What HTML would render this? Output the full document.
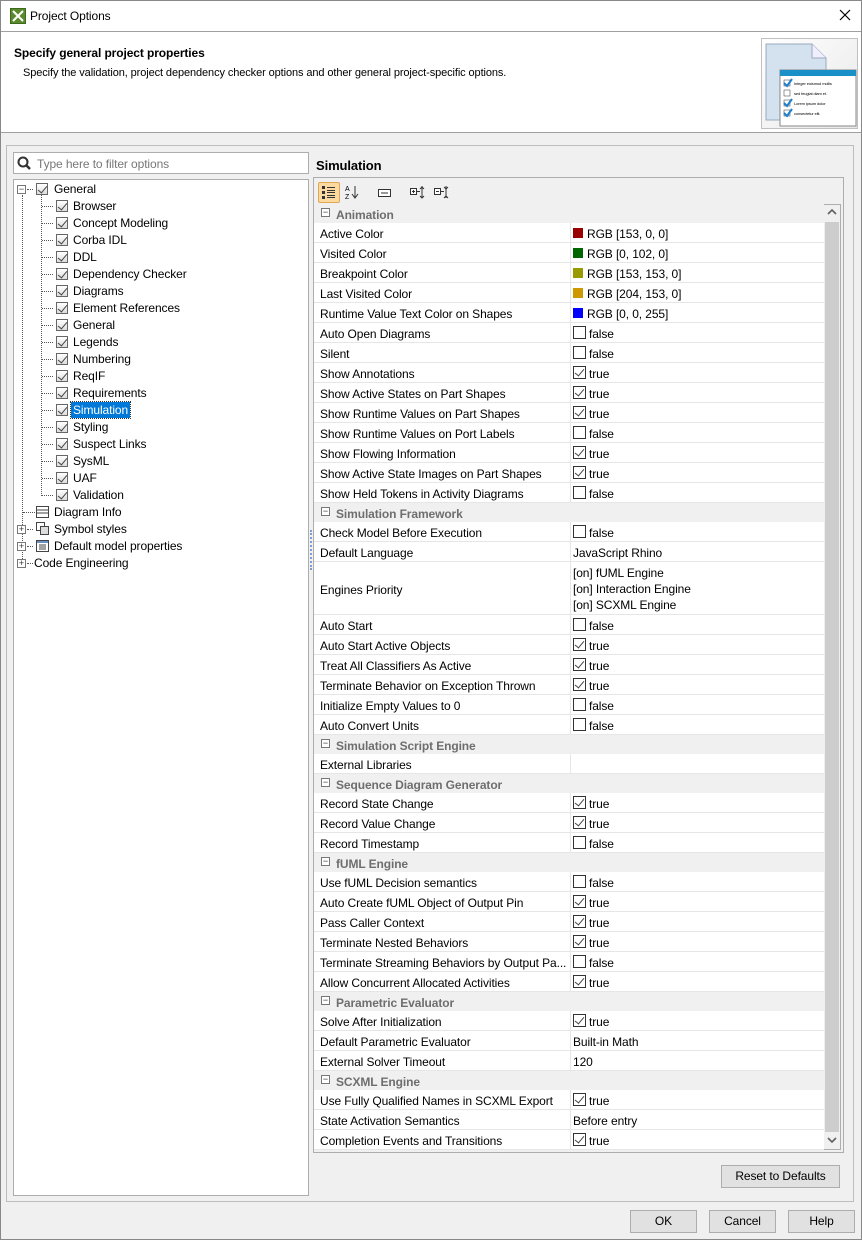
<!DOCTYPE html>
<html><head><meta charset="utf-8">
<style>
*{box-sizing:border-box;margin:0;padding:0}
body{width:862px;height:1240px;background:#f0f0f0;font-family:"Liberation Sans",sans-serif;font-size:12px;color:#000;position:relative;overflow:hidden;letter-spacing:-0.1px}
.abs{position:absolute}
#win{position:absolute;left:0;top:0;width:862px;height:1240px;border:1px solid #888}
.cb{position:absolute;width:13px;height:13px;border:1px solid #333;background:#fff}
.cb.on::after{content:"";position:absolute;left:3px;top:0px;width:4px;height:8px;border:solid #444;border-width:0 1.5px 1.5px 0;transform:rotate(40deg)}
.tcb{position:absolute;width:12px;height:12px;border:1px solid #666;background:linear-gradient(#fff,#ddd)}
.tcb::after{content:"";position:absolute;left:3px;top:0px;width:4px;height:8px;border:solid #444;border-width:0 1.3px 1.3px 0;transform:rotate(40deg)}
.ti{position:absolute;height:17px;line-height:17px;white-space:nowrap}
.hd{position:absolute;border-top:1px dotted #555;height:0}
.vd{position:absolute;border-left:1px dotted #555;width:0}
.exp{position:absolute;width:9px;height:9px;border:1px solid #777;background:#fff;font-size:9px;line-height:7px;text-align:center;color:#333}
.row{position:absolute;left:314px;width:510px;border-bottom:1px solid #e6e6e6;background:#fff}
.row .l{position:absolute;left:6px;top:0;white-space:nowrap}
.row .v{position:absolute;left:256px;top:0;bottom:0;border-left:1px solid #e6e6e6;padding-left:2px;white-space:nowrap}
.sec{position:absolute;left:314px;width:510px;background:#f0f0f0;color:#6e6e6e;font-weight:bold}
.btn{position:absolute;height:23px;border:1px solid #adadad;background:#e1e1e1;text-align:center;line-height:21px}
</style></head><body>
<div id="win"></div>
<div class="abs" style="left:1px;top:1px;width:860px;height:30px;background:#fff"></div>
<svg class="abs" style="left:10px;top:8px" width="16" height="16"><rect x="0.5" y="0.5" width="15" height="15" fill="#5b8a2e" stroke="#3d6a1a"/><path d="M3 3 L13 13 M13 3 L3 13" stroke="#fff" stroke-width="2"/></svg>
<div class="abs" style="left:30px;top:9px;font-size:12px">Project Options</div>
<svg class="abs" style="left:839px;top:9px" width="12" height="12"><path d="M1 1L11 11M11 1L1 11" stroke="#000" stroke-width="1.2"/></svg>
<div class="abs" style="left:1px;top:31px;width:860px;height:102px;background:#fff;border-top:1px solid #a0a0a0;border-bottom:1px solid #a0a0a0"></div>
<div class="abs" style="left:14px;top:46px;font-weight:bold;font-size:12px">Specify general project properties</div>
<div class="abs" style="left:23px;top:67px;font-size:11px">Specify the validation, project dependency checker options and other general project-specific options.</div>
<div class="abs" style="left:761px;top:38px;width:97px;height:91px;border:1px solid #c0c0c0;background:linear-gradient(135deg,#fff,#e8e8e8)"></div>
<svg class="abs" style="left:762px;top:40px" width="95" height="88">
<path d="M4 4 H50 L64 18 V80 H4Z" fill="#d4e2f0" stroke="#9ab" /><path d="M50 4 V18 H64" fill="#eef" stroke="#9ab"/>
<rect x="18" y="30" width="76" height="56" fill="#fff" stroke="#888"/><rect x="18" y="30" width="76" height="6" fill="#1a90c8"/>
<g font-size="4" font-family="Liberation Sans" fill="#000"><rect x="22" y="40" width="6" height="6" fill="#fff" stroke="#333" stroke-width=".5"/><text x="32" y="45">Integer euismod mollis</text>
<rect x="22" y="50" width="6" height="6" fill="#fff" stroke="#333" stroke-width=".5"/><text x="32" y="55">sed feugiat diam et.</text>
<rect x="22" y="60" width="6" height="6" fill="#fff" stroke="#333" stroke-width=".5"/><text x="32" y="65">Lorem ipsum dolor</text>
<rect x="22" y="70" width="6" height="6" fill="#fff" stroke="#333" stroke-width=".5"/><text x="32" y="75">consectetur elit.</text></g>
<path d="M22 43l3 3 5-7M22 63l3 3 5-7M22 73l3 3 5-7" stroke="#1a7fd0" stroke-width="2" fill="none"/>
</svg>
<div class="abs" style="left:6px;top:145px;width:307px;height:1057px;border:1px solid #bdbdbd;border-right:none"></div>
<div class="abs" style="left:13px;top:152px;width:296px;height:22px;border:1px solid #adadad;background:#fff"></div>
<svg class="abs" style="left:17px;top:156px" width="15" height="15"><circle cx="6" cy="6" r="4.5" stroke="#333" stroke-width="2" fill="none"/><path d="M9.5 9.5 L13 13" stroke="#333" stroke-width="2.5"/></svg>
<div class="abs" style="left:37px;top:157px;color:#777">Type here to filter options</div>
<div class="abs" style="left:13px;top:179px;width:296px;height:1017px;border:1px solid #adadad;background:#fff"></div>
<div class="vd" style="left:22px;top:195px;height:368px"></div>
<div class="vd" style="left:41px;top:195px;height:301px"></div>
<div class="exp" style="left:17px;top:185px">−</div>
<div class="hd" style="left:27px;top:189px;width:6px"></div>
<div class="tcb" style="left:36px;top:183px"></div><div class="ti" style="left:54px;top:181px">General</div>
<div id="kids"></div>
<div class="hd" style="left:23px;top:512px;width:12px"></div>
<svg class="abs" style="left:36px;top:506px" width="13" height="12"><rect x=".5" y=".5" width="12" height="11" fill="#fff" stroke="#444"/><path d="M1 4H12M1 7H12" stroke="#444"/></svg>
<div class="ti" style="left:54px;top:504px">Diagram Info</div>
<div class="exp" style="left:17px;top:525px">+</div><div class="hd" style="left:27px;top:529px;width:6px"></div>
<svg class="abs" style="left:36px;top:522px" width="13" height="13"><rect x=".5" y=".5" width="8" height="8" fill="#fff" stroke="#444"/><rect x="4.5" y="4.5" width="8" height="8" fill="#ddd" stroke="#444"/></svg>
<div class="ti" style="left:54px;top:521px">Symbol styles</div>
<div class="exp" style="left:17px;top:542px">+</div><div class="hd" style="left:27px;top:546px;width:6px"></div>
<svg class="abs" style="left:36px;top:540px" width="13" height="12"><rect x=".5" y=".5" width="12" height="11" fill="#fff" stroke="#444"/><rect x="1" y="1" width="11" height="2" fill="#6a8fc0"/><path d="M3 5H10M3 7H10M3 9H10" stroke="#444"/></svg>
<div class="ti" style="left:54px;top:538px">Default model properties</div>
<div class="exp" style="left:17px;top:559px">+</div><div class="hd" style="left:27px;top:563px;width:6px"></div>
<div class="ti" style="left:34px;top:555px">Code Engineering</div>
<div class="abs" style="left:310px;top:530px;width:2px;height:40px;border-left:2px dotted #7aa0d0"></div>
<div class="abs" style="left:313px;top:145px;width:541px;height:1057px;border:1px solid #bdbdbd;border-left:none"></div>
<div class="abs" style="left:316px;top:158px;font-weight:bold;font-size:13px">Simulation</div>
<div class="abs" style="left:313px;top:177px;width:531px;height:976px;border:1px solid #adadad"></div>
<div class="abs" style="left:313px;top:204px;width:528px;height:946px;border:1px solid #adadad;background:#fff"></div>
<div class="abs" style="left:318px;top:182px;width:22px;height:21px;background:#fcd9a0;border:1px solid #e0a850;border-radius:2px"></div>
<svg class="abs" style="left:322px;top:186px" width="14" height="13"><g fill="#333"><rect x="0" y="0" width="3" height="3"/><rect x="0" y="5" width="3" height="3"/><rect x="0" y="10" width="3" height="3"/><rect x="5" y="1" width="8" height="1"/><rect x="5" y="4" width="8" height="1"/><rect x="5" y="6" width="8" height="1"/><rect x="5" y="9" width="8" height="1"/><rect x="5" y="11" width="8" height="1"/></g></svg>
<svg class="abs" style="left:345px;top:185px" width="14" height="15"><text x="0" y="6" font-size="7" font-family="Liberation Sans">A</text><text x="0" y="14" font-size="7" font-family="Liberation Sans">Z</text><path d="M10 1V12M7 9l3 4 3-4" stroke="#333" fill="none"/></svg>
<svg class="abs" style="left:378px;top:189px" width="14" height="9"><rect x=".5" y=".5" width="12" height="7" fill="#fff" stroke="#333"/><path d="M3 4H10" stroke="#333"/></svg>
<svg class="abs" style="left:410px;top:186px" width="16" height="14"><rect x=".5" y="2.5" width="6" height="6" fill="#fff" stroke="#333"/><path d="M2 5.5H5M3.5 4V7M7 5.5H10M12 0V12M10 3l2-2 2 2M10 10l2 2 2-2" stroke="#333" fill="none"/></svg>
<svg class="abs" style="left:434px;top:186px" width="16" height="14"><rect x=".5" y="2.5" width="6" height="6" fill="#fff" stroke="#333"/><path d="M2 5.5H5M7 5.5H10M12 0V12M10 1l2 2 2-2M10 12l2-2 2 2" stroke="#333" fill="none"/></svg>
<div id="grid"></div>
<div class="abs" style="left:824px;top:205px;width:16px;height:944px;background:#f0f0f0"></div>
<div class="abs" style="left:825px;top:222px;width:14px;height:910px;background:#cdcdcd"></div>
<svg class="abs" style="left:827px;top:208px" width="10" height="8"><path d="M1 6L5 2L9 6" stroke="#606060" stroke-width="1.6" fill="none"/></svg>
<svg class="abs" style="left:827px;top:1136px" width="10" height="8"><path d="M1 2L5 6L9 2" stroke="#606060" stroke-width="1.6" fill="none"/></svg>
<div class="btn" style="left:721px;top:1165px;width:119px">Reset to Defaults</div>
<div class="btn" style="left:630px;top:1210px;width:67px">OK</div>
<div class="btn" style="left:709px;top:1210px;width:67px">Cancel</div>
<div class="btn" style="left:788px;top:1210px;width:67px">Help</div>
<script>
var kids=["Browser","Concept Modeling","Corba IDL","DDL","Dependency Checker","Diagrams","Element References","General","Legends","Numbering","ReqIF","Requirements","Simulation","Styling","Suspect Links","SysML","UAF","Validation"];
var h="";kids.forEach(function(k,i){var y=198+17*i;
h+='<div class="hd" style="left:42px;top:'+(y+8)+'px;width:11px"></div><div class="tcb" style="left:56px;top:'+(y+2)+'px"></div>';
if(k=="Simulation"&&i==12)h+='<div class="ti" style="left:71px;top:'+y+'px;height:16px;line-height:16px;background:#0078d7;color:#fff;padding:0 2px;outline:1px dotted #333">'+k+'</div>';
else h+='<div class="ti" style="left:73px;top:'+y+'px">'+k+'</div>';});
document.getElementById("kids").innerHTML=h;
var C=function(c){return '<span style="position:absolute;left:2px;top:5px;width:10px;height:10px;background:'+c+'"></span><span style="position:absolute;left:16px;top:4px">'};
var rows=[["S","Animation"],["Active Color","c#990000","RGB [153, 0, 0]"],["Visited Color","c#006600","RGB [0, 102, 0]"],["Breakpoint Color","c#999900","RGB [153, 153, 0]"],["Last Visited Color","c#cc9900","RGB [204, 153, 0]"],["Runtime Value Text Color on Shapes","c#0000ff","RGB [0, 0, 255]"],
["Auto Open Diagrams",0],["Silent",0],["Show Annotations",1],["Show Active States on Part Shapes",1],["Show Runtime Values on Part Shapes",1],["Show Runtime Values on Port Labels",0],["Show Flowing Information",1],["Show Active State Images on Part Shapes",1],["Show Held Tokens in Activity Diagrams",0],
["S","Simulation Framework"],["Check Model Before Execution",0],["Default Language","tJavaScript Rhino"],["Engines Priority","E"],["Auto Start",0],["Auto Start Active Objects",1],["Treat All Classifiers As Active",1],["Terminate Behavior on Exception Thrown",1],["Initialize Empty Values to 0",0],["Auto Convert Units",0],
["S","Simulation Script Engine"],["External Libraries","t"],["S","Sequence Diagram Generator"],["Record State Change",1],["Record Value Change",1],["Record Timestamp",0],
["S","fUML Engine"],["Use fUML Decision semantics",0],["Auto Create fUML Object of Output Pin",1],["Pass Caller Context",1],["Terminate Nested Behaviors",1],["Terminate Streaming Behaviors by Output Pa...",0],["Allow Concurrent Allocated Activities",1],
["S","Parametric Evaluator"],["Solve After Initialization",1],["Default Parametric Evaluator","tBuilt-in Math"],["External Solver Timeout","t120"],
["S","SCXML Engine"],["Use Fully Qualified Names in SCXML Export",1],["State Activation Semantics","tBefore entry"],["Completion Events and Transitions",1]];
var y=204,g="";rows.forEach(function(r){
if(r[0]=="S"){g+='<div class="sec" style="top:'+y+'px;height:19px"><span style="position:absolute;left:7px;top:4px;width:9px;height:9px;border:1px solid #777;background:#fff;font-size:9px;line-height:6px;text-align:center;color:#333;font-weight:normal">−</span><span style="position:absolute;left:22px;top:4px">'+r[1]+'</span></div>';y+=19;return;}
var hgt=r[1]=="E"?53:20,v;
if(r[1]==="E")v='<div style="position:absolute;left:2px;top:3px;line-height:16px">[on] fUML Engine<br>[on] Interaction Engine<br>[on] SCXML Engine</div>';
else if(r[1]===0||r[1]===1)v='<span class="cb'+(r[1]?' on':'')+'" style="left:2px;top:3px"></span><span style="position:absolute;left:18px;top:4px">'+(r[1]?'true':'false')+'</span>';
else if(r[1][0]=="c")v=C(r[1].slice(1))+r[2]+'</span>';
else v='<span style="position:absolute;left:2px;top:4px">'+r[1].slice(1)+'</span>';
g+='<div class="row" style="top:'+y+'px;height:'+hgt+'px"><span class="l" style="top:'+((hgt-12)/2)+'px">'+r[0]+'</span><div class="v">'+v+'</div></div>';y+=hgt;});
document.getElementById("grid").innerHTML=g;
</script>
</body></html>
